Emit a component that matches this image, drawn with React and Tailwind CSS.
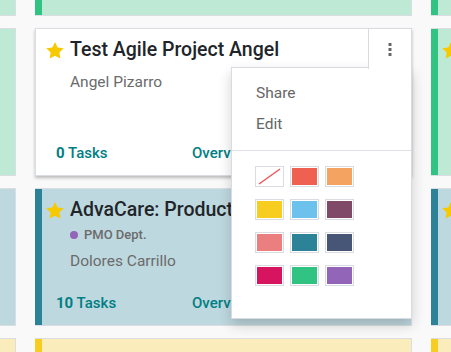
import React from 'react';

const THEMES = {
  white: { bg: 'bg-white border-l', strip: 'w-[6px]' },
  green: { bg: 'bg-[#bde9d5] border-l-0', strip: 'w-[7px] bg-[#30c381]' },
  teal: { bg: 'bg-[#bed8df] border-l-0', strip: 'w-[7px] bg-[#2c8397]' },
  yellow: { bg: 'bg-[#fbedbb] border-l-0', strip: 'w-[7px] bg-[#f7cd1f]' },
};

const SWATCHES = [
  null, '#f06050', '#f4a460',
  '#f7cd1f', '#6cc1ed', '#814968',
  '#eb7e7f', '#2c8397', '#475577',
  '#d6145f', '#30c381', '#9365b8',
];

function Star({ fav }) {
  return (
    <svg viewBox="2 2 20 19.5" className="w-[18px] h-[17px] shrink-0">
      <polygon
        points="12,2 15.09,8.26 22,9.27 17,14.14 18.18,21.02 12,17.77 5.82,21.02 7,14.14 2,9.27 8.91,8.26"
        fill={fav ? '#f7c900' : 'none'}
        stroke={fav ? 'none' : '#a0a0a0'}
        strokeWidth="1.6"
      />
    </svg>
  );
}

function Kebab() {
  return (
    <svg viewBox="0 0 4 13" className="w-[4px] h-[13px]">
      <rect x="0.5" y="0" width="3" height="3" rx="0.6" fill="#666" />
      <rect x="0.5" y="5" width="3" height="3" rx="0.6" fill="#666" />
      <rect x="0.5" y="10" width="3" height="3" rx="0.6" fill="#666" />
    </svg>
  );
}

function Menu() {
  return (
    <div className="absolute left-[195px] top-[38px] right-[-1px] bg-white border border-[#d8dbdf] shadow-[0_6px_12px_rgba(0,0,0,0.18)] pt-[10px] pb-[32px]">
      {['Share', 'Edit'].map((item) => (
        <div key={item} className="h-[31px] flex items-center px-[24px] text-[15.5px] text-[#666]">
          {item}
        </div>
      ))}
      <div className="mt-[10px] h-px bg-[#dee2e6]"></div>
      <div className="grid grid-cols-[29px_29px_29px] gap-x-[6px] gap-y-[12px] pl-[23px] pt-[15px]">
        {SWATCHES.map((c, i) => (
          <div key={i} className="w-[29px] h-[21px] border border-[#d9dde2] p-px bg-white">
            {c ? (
              <div className="w-full h-full" style={{ backgroundColor: c }}></div>
            ) : (
              <svg viewBox="0 0 25 17" className="w-full h-full">
                <line x1="2" y1="16" x2="23" y2="1" stroke="#f0535b" strokeWidth="1.4" />
              </svg>
            )}
          </div>
        ))}
      </div>
    </div>
  );
}

function Card({ theme, title, tag, name, tasks, fav, open }) {
  const t = THEMES[theme];
  return (
    <div
      className={`relative flex h-full border border-[#dadde1] ${t.bg} ${open ? 'z-10 shadow-[0_2px_3px_rgba(0,0,0,0.25)]' : ''}`}
    >
      <div className={`shrink-0 ${t.strip}`}></div>
      <div className="flex-1 min-w-0 flex flex-col pt-[9px] pb-[12px]">
        <div className="flex items-center gap-[6px] pl-[4px] pr-[48px]">
          <Star fav={fav} />
          <div className="min-h-[24px] text-[19.5px] leading-[24px] font-medium text-[#212529] whitespace-nowrap overflow-hidden">
            {title}
          </div>
        </div>
        {tag && (
          <div className="flex items-center gap-[6px] pl-[28px] mt-[4px] text-[13px] leading-[18px] font-medium text-[#6b6b6b]">
            <span className="w-[8px] h-[8px] rounded-full bg-[#9365b8]"></span>
            {tag}
          </div>
        )}
        {name && (
          <div className={`pl-[28px] text-[15.5px] leading-[22px] text-[#6b6b6b] ${tag ? 'mt-[6px]' : 'mt-[9px]'}`}>
            {name}
          </div>
        )}
        {tasks !== undefined && (
          <div className="mt-auto flex pl-[14px] text-[15px] leading-[20px] text-[#017e84] font-medium">
            <div className="w-[136px]">
              <span className="font-bold">{tasks}</span> Tasks
            </div>
            <div>Overview</div>
          </div>
        )}
      </div>
      <div
        className={`absolute top-[-1px] right-[-1px] w-[44px] h-[41px] flex items-center justify-center ${open ? 'z-20 bg-white border border-b-0 border-[#d8dbdf]' : ''}`}
      >
        <Kebab />
      </div>
      {open && <Menu />}
    </div>
  );
}

const ROWS = [
  [
    { theme: 'green', title: 'Office Design', name: 'Marc Demo', tasks: 8, fav: true },
    { theme: 'green', title: 'Research & Development', name: 'Marc Demo', tasks: 12, fav: true },
    { theme: 'green', title: 'Renovations', name: 'Mitchell Admin', tasks: 5, fav: true },
  ],
  [
    { theme: 'green', title: 'Construction', name: 'Marc Demo', tasks: 3, fav: true },
    { theme: 'white', title: 'Test Agile Project Angel', name: 'Angel Pizarro', tasks: 0, fav: true, open: true },
    { theme: 'green', title: 'Website Redesign', name: 'Mitchell Admin', tasks: 9, fav: true },
  ],
  [
    { theme: 'teal', title: 'Customer Care', tag: 'PMO Dept.', name: 'Marc Demo', tasks: 4, fav: true },
    { theme: 'teal', title: 'AdvaCare: Product Development', tag: 'PMO Dept.', name: 'Dolores Carrillo', tasks: 10, fav: true },
    { theme: 'teal', title: 'AdvaCare: Onboarding', tag: 'PMO Dept.', name: 'Dolores Carrillo', tasks: 7, fav: true },
  ],
  [
    { theme: 'yellow', title: '', fav: false },
    { theme: 'yellow', title: '', fav: false },
    { theme: 'yellow', title: '', fav: false },
  ],
];

export default function App() {
  return (
    <div className="w-[451px] h-[352px] overflow-hidden bg-[#f9f9f9] font-['Roboto','Liberation_Sans',sans-serif]">
      <div className="grid grid-cols-[377px_377px_377px] grid-rows-[100px_148px_138px_140px] gap-x-[19px] gap-y-[12px] ml-[-361px] mt-[-84px] w-max">
        {ROWS.flat().map((card, i) => (
          <Card key={i} {...card} />
        ))}
      </div>
    </div>
  );
}
